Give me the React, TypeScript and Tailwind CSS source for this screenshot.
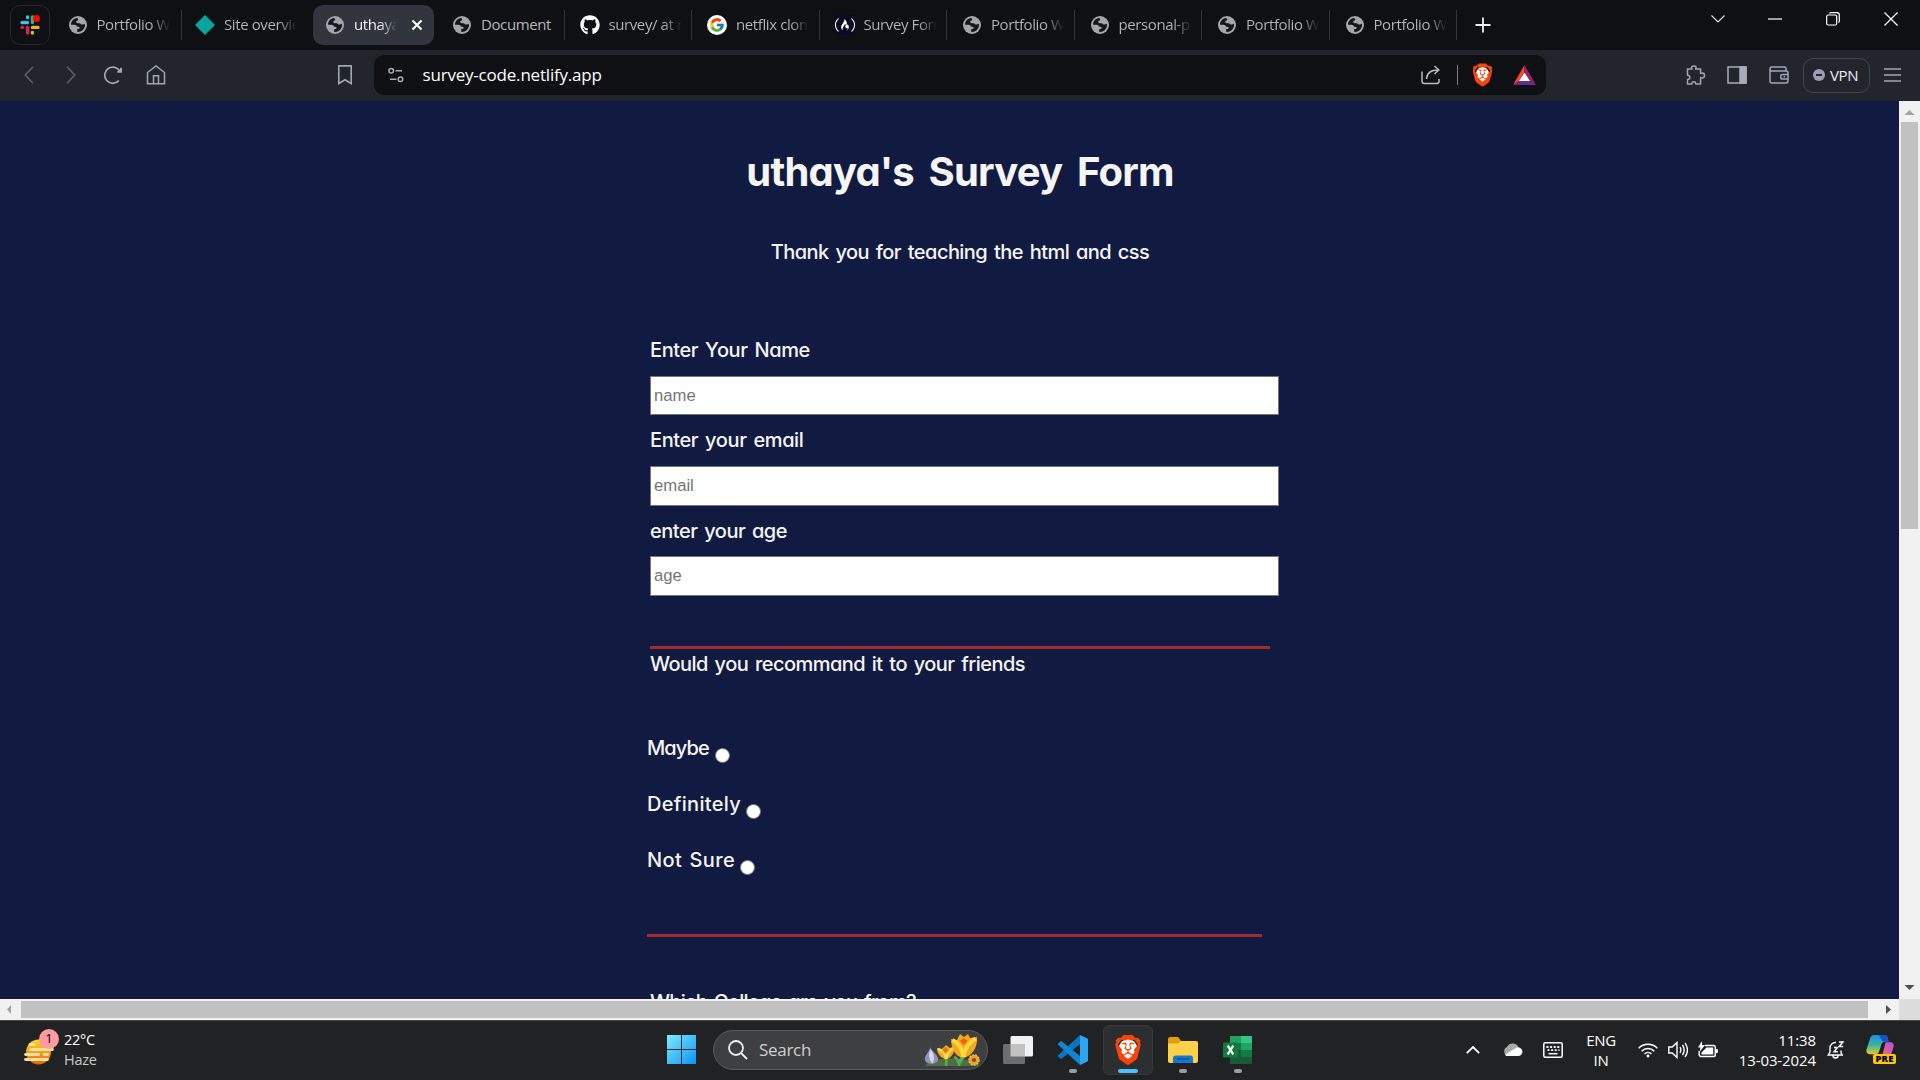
import React, { ReactNode } from "react";
import { FaGithub } from "react-icons/fa";
import { FcGoogle } from "react-icons/fc";
import { SiBrave, SiFreecodecamp } from "react-icons/si";

function Globe() {
  return (
    <svg viewBox="0 0 18 18" className="size-[18px]">
      <circle cx="9" cy="9" r="9" fill="#a3a7ac" />
      <path
        d="M8.200 2C4.600 2.200 2 5.300 2 8.800h3.500c1.500 0 2.300.7 2.500 1.900h1.500c1 0 1.300.8 1 1.500-.3.800-1.500.9-2.300.8v2.900C12.500 16.300 16 13 16 9c0-.5 0-.9-.1-1.300-.9.700-2.300 1.100-3.400.7-.9-.3-.9-1.200-1.700-1.200H8.600c-1.600 0-2-2.200-.4-2.600.9-.2 1.300-.6 1-1.200C9 3 8.600 2.500 8.200 2Z"
        fill="#15171b"
      />
    </svg>
  );
}

function SlackMark() {
  return (
    <svg viewBox="0 0 20 20" className="size-5">
      <g strokeWidth="3.400" strokeLinecap="round" fill="none">
        <path d="M2 7.600h5.500M7.600 2v.5" stroke="#36c5f0" />
        <path d="M12.400 2v5.500" stroke="#2eb67d" />
        <path d="M12.500 12.400H18M12.400 17.500v.5" stroke="#ecb22e" />
        <path d="M7.600 12.500V18M2 12.400h.5" stroke="#e01e5a" />
      </g>
      <circle cx="16.500" cy="3.400" r="3.500" fill="#ff0000" />
    </svg>
  );
}

function BraveLion({ className }: { className: string }) {
  return (
    <span className={"grid place-items-center " + className}>
      <span className="col-start-1 row-start-1 h-[70%] w-[58%] rounded-full bg-white" />
      <SiBrave className="col-start-1 row-start-1 h-full w-full text-[#fb4209]" />
    </span>
  );
}

type TabData = { icon: ReactNode; title: string; active?: boolean; noLine?: boolean; short?: boolean };

const tabs: TabData[] = [
  { icon: <Globe />, title: "Portfolio We" },
  {
    icon: (
      <svg viewBox="0 0 20 20" className="size-5">
        <path d="M10 0l10 10-10 10L0 10z" fill="#05a6a0" />
      </svg>
    ),
    title: "Site overview",
    noLine: true,
  },
  { icon: <Globe />, title: "uthaya's", active: true, noLine: true },
  { icon: <Globe />, title: "Document", short: true },
  { icon: <FaGithub className="size-5 text-white" />, title: "survey/ at m" },
  {
    icon: (
      <span className="grid size-5 place-items-center rounded-full bg-white">
        <FcGoogle className="size-4" />
      </span>
    ),
    title: "netflix clone",
  },
  {
    icon: (
      <span className="grid size-5 place-items-center bg-[#0a0a23]">
        <SiFreecodecamp className="size-5 text-white" />
      </span>
    ),
    title: "Survey Form",
  },
  { icon: <Globe />, title: "Portfolio We" },
  { icon: <Globe />, title: "personal-po" },
  { icon: <Globe />, title: "Portfolio We" },
  { icon: <Globe />, title: "Portfolio We" },
];

function titleClass(tab: TabData) {
  if (tab.active)
    return "mb-0.5 ml-[9px] w-[43px] overflow-hidden whitespace-nowrap bg-gradient-to-r from-white from-60% to-transparent bg-clip-text text-[15px] tracking-[-0.4px] text-transparent";
  if (tab.short) return "mb-0.5 ml-[9px] whitespace-nowrap text-[15px] tracking-[-0.4px] text-[#b4b6ba]";
  return "mb-0.5 ml-[9px] w-[73px] overflow-hidden whitespace-nowrap bg-gradient-to-r from-[#b4b6ba] from-75% to-transparent bg-clip-text text-[15px] tracking-[-0.4px] text-transparent";
}

function Tab({ tab, index }: { tab: TabData; index: number }) {
  return (
    <div className="flex h-[50px] w-[127.500px] shrink-0 items-center">
      <div
        className={
          tab.active
            ? "ml-[3.500px] flex h-10 w-[121px] items-center rounded-[10px] bg-[#31353e] pl-3"
            : index < 2
              ? "ml-1 flex h-10 w-[121px] items-center pl-[9px]"
              : "ml-1 flex h-10 w-[121px] items-center pl-[11px]"
        }
      >
        <span className="flex w-5 shrink-0 justify-center">{tab.icon}</span>
        <span className={titleClass(tab)}>{tab.title}</span>
        {tab.active && (
          <svg viewBox="0 0 12 12" className="ml-[14px] size-3" stroke="#fff" strokeWidth="2">
            <path d="M1.500 1.500l9 9M10.500 1.500l-9 9" />
          </svg>
        )}
      </div>
      {!tab.noLine && <span className="ml-auto h-[30px] w-px bg-[#34363b]" />}
    </div>
  );
}

function TabStrip() {
  return (
    <div className="flex h-[50px] items-center bg-[#0e1014]">
      <div className="ml-2.5 mr-[4.500px] grid size-10 shrink-0 place-items-center rounded-[10px] border border-[#26282d]">
        <SlackMark />
      </div>
      {tabs.map((tab, i) => (
        <Tab key={i} tab={tab} index={i} />
      ))}
      <svg viewBox="0 0 16 16" className="ml-[18px] size-4" stroke="#f1f1f3" strokeWidth="1.800">
        <path d="M8 .5v15M.5 8h15" />
      </svg>
      <div className="ml-auto mr-[22px] flex h-[37px] items-center self-start">
        <svg viewBox="0 0 14 8" className="mr-[43px] h-2 w-3.5" fill="none" stroke="#e8e8e8" strokeWidth="1.100">
          <path d="M.5.5L7 7 13.500.5" />
        </svg>
        <svg viewBox="0 0 14 2" className="mr-11 h-0.5 w-3.5">
          <path d="M0 1h14" stroke="#fff" strokeWidth="1.200" />
        </svg>
        <svg viewBox="0 0 14 14" className="mr-11 size-3.5" fill="none" stroke="#fff" strokeWidth="1.200">
          <rect x=".7" y="3" width="10" height="10" rx="1.500" />
          <path d="M3.500 1.500c.3-.5.8-.8 1.500-.8h6c1.400 0 2.300.9 2.300 2.300v6c0 .8-.3 1.200-.8 1.500" />
        </svg>
        <svg viewBox="0 0 14 14" className="size-3.5" stroke="#fff" strokeWidth="1.200">
          <path d="M.5.5l13 13M13.500.5l-13 13" />
        </svg>
      </div>
    </div>
  );
}

function Toolbar() {
  return (
    <div className="flex h-[51px] items-center bg-[#22252c] pb-px">
      <svg viewBox="0 0 10 18" className="ml-6 h-[18px] w-2.5" fill="none" stroke="#5d6167" strokeWidth="1.600">
        <path d="M9 .8L1.200 9 9 17.200" />
      </svg>
      <svg viewBox="0 0 10 18" className="ml-[32px] h-[18px] w-2.5" fill="none" stroke="#5d6167" strokeWidth="1.600">
        <path d="M1 .8L8.800 9 1 17.200" />
      </svg>
      <svg viewBox="0 0 20 20" className="ml-[27px] size-5" fill="none" stroke="#9fa6b4" strokeWidth="1.700">
        <path d="M15.800 15.600A8.100 8.100 0 1 1 17 6.500" />
        <path d="M14.200 7h4V2.800" fill="#9fa6b4" />
      </svg>
      <svg viewBox="0 0 20 20" className="ml-[23px] size-5" fill="none" stroke="#9fa6b4" strokeWidth="1.500">
        <path d="M1.500 18.800V7.500L10 1l8.500 6.500v11.300zM7.500 18.800v-8h5v8" />
      </svg>
      <svg viewBox="0 0 14 20" className="ml-[172px] h-5 w-3.5" fill="none" stroke="#9fa6b4" strokeWidth="1.600">
        <path d="M.8.900h12.400v17.600L7 14.800.8 18.500z" />
      </svg>
      <div className="ml-[22px] flex h-10 w-[1172px] items-center rounded-[10px] bg-[#0e1014]">
        <svg viewBox="0 0 16 16" className="ml-3.5 size-4" fill="none" stroke="#a9abb0" strokeWidth="1.500">
          <circle cx="3.200" cy="3.700" r="2.300" />
          <path d="M7.500 3.700H14M2 12.200h6.500" />
          <circle cx="12.500" cy="12.200" r="2.300" />
        </svg>
        <span className="mb-px ml-[18.500px] text-[17px] tracking-[-0.2px] text-white">survey-code.netlify.app</span>
        <svg viewBox="0 0 20 20" className="ml-auto size-5" fill="none" stroke="#b9bbc0" strokeWidth="1.500">
          <path d="M1 6.500v9.800c0 1.300.9 2.200 2.200 2.200h12.600c1.300 0 2.200-.9 2.200-2.200V14M5.500 14c.3-5.500 4-9 12-9M13.500 1l4.300 4-4.300 4" />
        </svg>
        <span className="ml-4 h-5 w-px bg-[#7b7d82]" />
        <BraveLion className="ml-[13px] h-6 w-[23px]" />
        <svg viewBox="0 0 23 20" className="ml-[19px] mr-2.5 h-5 w-[23px]">
          <path d="M11.500 0L0 20l6-4 5.500-9z" fill="#ff4724" />
          <path d="M11.500 0L23 20l-6-4-5.500-9z" fill="#9e1f63" />
          <path d="M0 20h23l-6-4H6z" fill="#662d91" />
          <path d="M11.500 7.500L6 16h11z" fill="#fff" />
        </svg>
      </div>
      <div className="ml-auto flex items-center">
        <svg viewBox="0 0 20 20" className="size-5" fill="none" stroke="#9fa6b4" strokeWidth="1.500" strokeLinejoin="round">
          <path d="M1.500 4H6c0-.6-.5-.8-.5-1.500C5.500 1.500 6.600.9 7.800.9s2.300.6 2.300 1.600c0 .7-.5.900-.5 1.500h5v4.500c.5 0 .9-.4 1.700-.4 1.200 0 2.200 1 2.200 2.400s-1 2.400-2.200 2.400c-.8 0-1.200-.4-1.700-.4V19h-4.800c0-1-.5-2.200-2-2.200S5.800 18 5.800 19H1.500v-4.500c1.200 0 2.300-.6 2.300-2S2.700 10.300 1.500 10.300z" />
        </svg>
        <svg viewBox="0 0 20 18" className="ml-[21px] h-[18px] w-5" fill="none" stroke="#a7acb9" strokeWidth="1.500">
          <rect x="1" y="1" width="18" height="16" />
          <path d="M13 1h6v16h-6z" fill="#a7acb9" />
        </svg>
        <svg viewBox="0 0 20 18" className="ml-[22px] h-[18px] w-5" fill="none" stroke="#9fa6b4" strokeWidth="1.500">
          <path d="M17 5V2.500C17 1.500 16.500 1 15.500 1H3C1.800 1 1 1.800 1 3v12c0 1.200.8 2 2 2h14c1.200 0 2-.8 2-2V7c0-1.200-.8-2-2-2H3C1.800 5 1 4.300 1 3.200" />
          <path d="M19 8.500h-5.500c-1 0-1.800.8-1.800 1.800v.9c0 1 .8 1.800 1.800 1.800H19M14.500 10.800h1.500" />
        </svg>
        <div className="ml-3.5 flex h-[35px] w-[67px] items-center rounded-[10px] border-[1.500px] border-[#41454f] pl-[9px]">
          <span className="grid size-3 place-items-center rounded-full bg-[#9b9cb6]">
            <span className="h-0.5 w-1.5 bg-[#22252c]" />
          </span>
          <span className="ml-[5px] text-[15px] tracking-[-0.4px] text-[#ededf0]">VPN</span>
        </div>
        <svg viewBox="0 0 17 14" className="ml-3.5 mr-[19px] h-3.5 w-[17px]" stroke="#9fa6b4" strokeWidth="1.500">
          <path d="M0 1h17M0 7h17M0 13h17" />
        </svg>
      </div>
    </div>
  );
}

type FieldProps = { label: string; hint: string; labelClass: string; inputClass: string; className: string };

function Field({ label, hint, labelClass, inputClass, className }: FieldProps) {
  return (
    <label className={"block " + className}>
      <span className={"block whitespace-nowrap leading-[26px] " + labelClass}>{label}</span>
      <input
        type="text"
        placeholder={hint}
        className={
          "block w-[629px] border border-[#767676] bg-white px-[3px] font-['Liberation_Sans',sans-serif] text-[16.670px] font-normal tracking-normal text-black placeholder:text-[#757575] " +
          inputClass
        }
      />
    </label>
  );
}

function Choice({ label, spacing, gap }: { label: string; spacing: string; gap: string }) {
  return (
    <label className="flex h-14 items-start">
      <span className={"whitespace-nowrap leading-[26px] " + spacing}>{label}</span>
      <span className={"mt-[13px] size-[15px] shrink-0 rounded-full border border-[#767676] bg-white " + gap} />
    </label>
  );
}

function SurveyPage() {
  return (
    <main className="h-[898px] w-[1899px] overflow-hidden bg-[#111a40] font-['Comic_Sans_MS','Inter','Open_Sans',sans-serif] text-[20px] font-medium text-[#f5f5f5] [font-feature-settings:'cv11']">
      <header className="w-[1920px] text-center">
        <h1 className="pt-[45px] text-[40px] font-bold leading-[52px] tracking-[-0.8px] [word-spacing:6px]">
          uthaya's Survey Form
        </h1>
        <p className="mt-[41px] leading-[26px] tracking-[-0.55px] [word-spacing:2px]">
          Thank you for teaching the html and css
        </p>
      </header>
      <form className="ml-[650px]">
        <Field
          className="pt-[72px]"
          label="Enter Your Name"
          hint="name"
          labelClass="h-[39px] tracking-[-0.4px] [word-spacing:2px]"
          inputClass="h-[39px]"
        />
        <Field
          className="pt-3"
          label="Enter your email"
          hint="email"
          labelClass="h-[39px] tracking-[-0.4px] [word-spacing:2px]"
          inputClass="h-10"
        />
        <Field
          className="pt-3"
          label="enter your age"
          hint="age"
          labelClass="h-[38px] tracking-[-0.5px] [word-spacing:2px]"
          inputClass="h-10"
        />
        <hr className="mt-[50px] h-[3px] w-[620px] border-0 bg-[#a52a2a]" />
        <p className="mt-[2px] whitespace-nowrap leading-[26px] tracking-[-0.55px] [word-spacing:2px]">
          Would you recommand it to your friends
        </p>
        <div className="-ml-[3px] mt-[58px]">
          <Choice label="Maybe" spacing="tracking-[-0.9px]" gap="ml-[6px]" />
          <Choice label="Definitely" spacing="tracking-[0.300px]" gap="ml-[5px]" />
          <Choice label="Not Sure" spacing="tracking-[0.400px] [word-spacing:1.500px]" gap="ml-[5px]" />
          <hr className="mt-[31px] h-[3px] w-[615px] border-0 bg-[#a52a2a]" />
        </div>
        <p className="mt-[52px] whitespace-nowrap leading-[26px] tracking-[-0.7px] [word-spacing:2px]">
          Which College are you from?
        </p>
      </form>
    </main>
  );
}

function VerticalScrollbar() {
  return (
    <div className="flex h-[898px] w-[21px] flex-col items-center bg-[#f1f1f1]">
      <svg viewBox="0 0 21 21" className="size-[21px]">
        <path d="M10.500 9l5 5h-10z" fill="#a3a3a3" />
      </svg>
      <div className="h-[407px] w-[17px] bg-[#c1c1c1]" />
      <svg viewBox="0 0 21 21" className="mt-auto size-[21px]">
        <path d="M10.500 12l5-5h-10z" fill="#505050" />
      </svg>
    </div>
  );
}

function HorizontalScrollbar() {
  return (
    <div className="flex h-[21px] items-center bg-[#f1f1f1]">
      <svg viewBox="0 0 21 21" className="h-[21px] w-[21px] shrink-0">
        <path d="M7 10.500l4-4.500v9z" fill="#a3a3a3" />
      </svg>
      <div className="h-[17px] w-[1847px] bg-[#c1c1c1]" />
      <svg viewBox="0 0 21 21" className="ml-2.5 h-[21px] w-[21px] shrink-0">
        <path d="M13 10.500L8 6v9z" fill="#505050" />
      </svg>
      <div className="h-[21px] w-[21px] shrink-0 bg-[#dcdcdc]" />
    </div>
  );
}

function CrocusArt() {
  return (
    <svg viewBox="0 0 56 34" className="h-[34px] w-14">
      <path d="M1 33c2-5 12-7.500 26-7.500S53 28 55 33z" fill="#4b6f3d" />
      <path d="M22 33c1-5 0-8 0-11M35 33c0-5 2-8 4-11M30 24c3 1 4 3 4.500 6M42 22c-3 2-5 5-6 8" stroke="#55ab5c" strokeWidth="2.600" fill="none" />
      <path d="M6 14c1 4 9 8 8 13-1 5-12 5-13 0-1-5 5-8 5-13z" fill="#9590bb" />
      <path d="M6.500 16c3 4 5 9 2 14.500-4-4-4.500-9-2-14.500z" fill="#d6d3ea" />
      <path d="M13 15l5 1 4-4 4 3 4-1c1 5-2 11-8 12-6-1-9-6-9-11z" fill="#f2a91c" />
      <path d="M14 16c4 1 7 4 8 10M29 15c-3 2-6 5-7 11" stroke="#ffdc55" strokeWidth="2.600" fill="none" />
      <path d="M21.500 14l3 3.500-3 2.500-3-2.500z" fill="#ef6a17" />
      <path d="M27 6l6 1 3-6 4 3 4-3 2 4 7-1c1 10-5 20-14 20.500C31 24 27 15 27 6z" fill="#f2a91c" />
      <path d="M28.500 7c6 3 10 9 11 17M51.500 5.500c-7 4-11 10-12 18.500" stroke="#ffd843" strokeWidth="4" fill="none" />
      <path d="M39.500 5l4 3-3.500 4-4-4z" fill="#f2601a" />
      <circle cx="50" cy="27" r="5" fill="#efa326" stroke="#f7c04a" strokeWidth="1.500" strokeDasharray="2 1" />
      <circle cx="50" cy="27" r="2" fill="#8a4a12" />
    </svg>
  );
}

function AppSlot({ children, mark }: { children: ReactNode; mark?: "idle" | "active" }) {
  return (
    <div
      className={
        mark === "active"
          ? "relative flex h-[50px] w-[50px] items-center justify-center rounded-md border border-[#37393a] bg-[#2c2e2f]"
          : "relative flex h-[50px] w-[50px] items-center justify-center"
      }
    >
      {children}
      {mark === "idle" && <span className="absolute bottom-0.5 h-1 w-2 rounded-full bg-[#9c9c9c]" />}
      {mark === "active" && <span className="absolute bottom-px h-1 w-5 rounded-full bg-[#4cc2ff]" />}
    </div>
  );
}

function Taskbar() {
  return (
    <footer className="flex h-[60px] items-center border-t border-[#47484a] bg-[#202223] pb-[2px] text-white">
      <div className="flex w-[667px] items-center">
        <div className="relative ml-6 size-10">
          <svg viewBox="0 0 40 40" className="-ml-px size-10">
            <defs>
              <linearGradient id="sun" x1="0" y1="0" x2="0" y2="1">
                <stop offset="0" stopColor="#ffd91a" />
                <stop offset="1" stopColor="#ec6307" />
              </linearGradient>
            </defs>
            <circle cx="15.500" cy="22" r="12.500" fill="url(#sun)" />
            <path d="M7 14.500h4M7.500 19.500h22M2.500 24.500h13M21 24.500h3.500M2.500 29.500h22" stroke="#f3dfa6" strokeWidth="2.800" strokeLinecap="round" />
          </svg>
          <span className="absolute -top-px left-[15px] grid size-5 place-items-center rounded-full bg-[#ff99a4] text-[13px] leading-none text-black">
            1
          </span>
        </div>
        <div className="text-[14.500px] leading-5 tracking-[-0.3px]">
          <div>22°C</div>
          <div className="text-[#c9c9c9]">Haze</div>
        </div>
      </div>
      <svg viewBox="0 0 29 29" className="size-[29px]">
        <defs>
          <linearGradient id="win" x1="0" y1="0" x2="1" y2="1">
            <stop offset="0" stopColor="#7cecff" />
            <stop offset="1" stopColor="#0a93f5" />
          </linearGradient>
        </defs>
        <path d="M0 0h14v14H0zM15 0h14v14H15zM0 15h14v14H0zM15 15h14v14H15z" fill="url(#win)" />
      </svg>
      <div className="ml-[17px] flex h-10 w-[275px] items-center rounded-full border border-[#5a5b5c] bg-[#3d3f40]">
        <svg viewBox="0 0 20 20" className="ml-3.5 size-5" fill="none" stroke="#f0f0f0" strokeWidth="1.800">
          <circle cx="8" cy="8" r="7" />
          <path d="M13 13l6 6" />
        </svg>
        <span className="ml-[11px] text-[17px] tracking-[-0.3px] text-[#cfcfcf]">Search</span>
        <span className="ml-auto mr-[7px]">
          <CrocusArt />
        </span>
      </div>
      <div className="ml-[5px] flex gap-[5px]">
        <AppSlot>
          <svg viewBox="0 0 30 28" className="h-7 w-[30px]">
            <rect x="7.500" y="0" width="22.500" height="20.500" rx="1.500" fill="#f1f1f1" />
            <rect x="0" y="8" width="22" height="20" rx="1.500" fill="#6c6d6e" />
            <path d="M7.500 8H22v12.500H7.500z" fill="#c2c2c2" />
          </svg>
        </AppSlot>
        <AppSlot mark="idle">
          <svg viewBox="0 0 30 30" className="size-[30px]">
            <path d="M22 0v9L4 23.500c-.6.4-1.200.4-1.700 0L.4 21.800c-.6-.5-.6-1.200 0-1.700z" fill="#0c74bf" />
            <path d="M.4 10c-.6-.5-.6-1.200 0-1.700l1.900-1.800c.5-.4 1.100-.4 1.700 0L22 21v9z" fill="#1187d3" />
            <path d="M22 0l7 3.200c.7.300 1 .8 1 1.500v20.600c0 .7-.3 1.200-1 1.500L22 30z" fill="#2aa6f2" />
          </svg>
        </AppSlot>
        <AppSlot mark="active">
          <BraveLion className="h-[30px] w-[30px]" />
        </AppSlot>
        <AppSlot mark="idle">
          <svg viewBox="0 0 30 28" className="h-7 w-[30px]">
            <path d="M0 3c0-1 .7-2 2-2h8l3 3.500V10H0z" fill="#e09f07" />
            <path d="M0 7.500h10L13 5h15c1.300 0 2 .8 2 2v18c0 1.200-.8 2-2 2H2c-1.200 0-2-.8-2-2z" fill="#ffd04a" />
            <path d="M5 27v-5c0-1.600 1-2.500 2.500-2.500h15c1.500 0 2.500.9 2.500 2.500v5z" fill="#1677cf" />
            <path d="M9 23h12" stroke="#0a4d8e" strokeWidth="1.200" />
          </svg>
        </AppSlot>
        <AppSlot mark="idle">
          <svg viewBox="0 0 30 28" className="h-7 w-[30px]">
            <path d="M7 0h11v7H7z" fill="#21a366" />
            <path d="M18 0h11v7H18z" fill="#33c481" />
            <path d="M7 7h11v7H7z" fill="#107c41" />
            <path d="M18 7h11v7H18z" fill="#21a366" />
            <path d="M7 14h11v14H7z" fill="#185c37" />
            <path d="M18 14h11v7H18z" fill="#107c41" />
            <path d="M18 21h11v7H18z" fill="#185c37" />
            <rect y="6.500" width="15" height="15" rx="1.200" fill="#107c41" />
            <path d="M4.700 9.700l5.600 8.600M10.300 9.700l-5.600 8.600" stroke="#fff" strokeWidth="2.200" />
          </svg>
        </AppSlot>
      </div>
      <Tray />
    </footer>
  );
}

function Tray() {
  return (
    <div className="ml-auto flex items-center">
      <svg viewBox="0 0 14 8" className="h-2 w-3.5" fill="none" stroke="#fff" strokeWidth="1.800">
        <path d="M.8 7.200L7 1l6.200 6.200" />
      </svg>
      <svg viewBox="0 0 20 13" className="ml-[23px] h-[13px] w-5">
        <path d="M4.500 12.500A4.500 4.500 0 0 1 4 4a6.300 6.300 0 0 1 11.500.5z" fill="#a9a9a9" />
        <path d="M2 11.500L14 4.500a4.100 4.100 0 1 1 2 8.500H4c-1 0-1.600-.6-2-1.500z" fill="#fff" />
      </svg>
      <svg viewBox="0 0 20 16" className="ml-5 h-4 w-5" fill="none" stroke="#fff" strokeWidth="1.500">
        <rect x=".8" y=".8" width="18.400" height="14.400" rx="1.500" />
        <path d="M3.500 5h13" strokeDasharray="2 1.600" strokeWidth="1.800" />
        <path d="M4.500 8.200h12" strokeDasharray="2 1.600" strokeWidth="1.800" />
        <path d="M5.500 11.700h9" />
      </svg>
      <div className="ml-[23px] w-[30px] text-center text-[15px] leading-5 tracking-[-0.3px]">
        <div>ENG</div>
        <div>IN</div>
      </div>
      <svg viewBox="0 0 20 16" className="ml-[22px] h-4 w-5" fill="none" stroke="#fff" strokeWidth="1.500">
        <path d="M.7 6.200a13 13 0 0 1 18.600 0M3.700 9.200a8.800 8.800 0 0 1 12.600 0M6.500 12a5 5 0 0 1 7 0" />
        <circle cx="10" cy="14" r="1.400" fill="#fff" stroke="none" />
      </svg>
      <svg viewBox="0 0 20 18" className="ml-2.5 h-[18px] w-5" fill="none" stroke="#fff" strokeWidth="1.400">
        <path d="M.8 6v6h3.400L9 16.500v-15L4.200 6zM12 6.200c1 1.600 1 4 0 5.600M14.500 4c2 3 2 7 0 10M17 1.800c3 4.300 3 10 0 14.400" />
      </svg>
      <svg viewBox="0 0 20 18" className="ml-2.5 h-[18px] w-5">
        <path d="M7 4.500h8.500c1 0 1.800.8 1.800 1.800v7.400c0 1-.8 1.800-1.800 1.800H3c-1 0-1.800-.8-1.800-1.800V10" fill="none" stroke="#fff" strokeWidth="1.400" />
        <path d="M8.500 6.500h6.700v7H3.500v-2zM18 8h1.500c.6 0 .6 4 0 4H18zM4 0L0 6.500h2.500L1.500 11 7 4H4z" fill="#fff" />
      </svg>
      <div className="ml-[20px] w-[78px] whitespace-nowrap text-right text-[15px] leading-5 tracking-[-0.1px]">
        <div>11:38</div>
        <div>13-03-2024</div>
      </div>
      <svg viewBox="0 0 18 18" className="ml-[11px] size-[18px]" fill="none" stroke="#fff" strokeWidth="1.400">
        <path d="M9 1.500C5.500 1.200 3 3.800 3 7v4l-1.800 3h14L14 11.500V9.500M6 14.500c0 3.300 5 3.300 5 0M7 6.500h3.500L7 10.800h3.800M12 1h4l-4 4.500h4.200" />
      </svg>
      <div className="relative ml-[21px] mr-6 h-[29px] w-[30px]">
        <svg viewBox="0 0 30 26" className="h-[25px] w-[29px]">
          <defs>
            <linearGradient id="cpA" x1="0" y1="0" x2="0" y2="1">
              <stop offset="0" stopColor="#1b8df0" />
              <stop offset=".5" stopColor="#35b5a0" />
              <stop offset="1" stopColor="#e6c72a" />
            </linearGradient>
            <linearGradient id="cpB" x1="1" y1="0" x2="0" y2="1">
              <stop offset="0" stopColor="#a457e8" />
              <stop offset=".5" stopColor="#e55aa8" />
              <stop offset="1" stopColor="#f8904c" />
            </linearGradient>
          </defs>
          <path d="M9 0h10c2 0 3 1.200 3.500 3l1 4h-4c-2 0-3 1-3.600 3l-2.300 7c-.7 2-1.600 3-3.600 3H4c-3 0-4.300-2-3.500-5L4 4c.7-2.500 2-4 5-4z" fill="url(#cpA)" />
          <path d="M12 0h7c2 0 3 1.200 3.500 3l1 4h-4C15 7 15 0 12 0z" fill="#1553c9" />
          <path d="M20.500 7.500H25c3 0 4.400 2 3.600 5l-3 9c-.7 2.500-2 4-5 4h-7c2-.6 2.500-2 3-3.500l3-11c.3-1.500.3-2.500.9-3.500z" fill="url(#cpB)" />
        </svg>
        <span className="absolute bottom-0 right-0 grid h-[10px] w-[23px] place-items-center rounded-[2px] bg-[#ffc60a] text-[9.500px] font-extrabold leading-none tracking-[0.2px] text-black">
          PRE
        </span>
      </div>
    </div>
  );
}

export default function App() {
  return (
    <div className="h-[1080px] w-[1920px] overflow-hidden font-['Open_Sans','Noto_Sans',sans-serif]">
      <TabStrip />
      <Toolbar />
      <div className="flex">
        <SurveyPage />
        <VerticalScrollbar />
      </div>
      <HorizontalScrollbar />
      <Taskbar />
    </div>
  );
}
